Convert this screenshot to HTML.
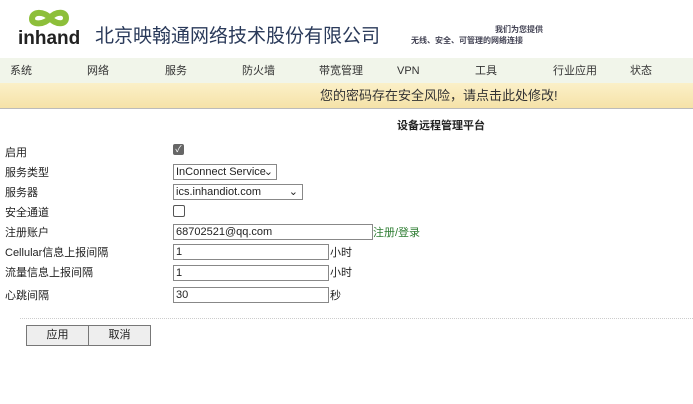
<!DOCTYPE html>
<html><head><meta charset="utf-8"><style>
body{margin:0;width:693px;height:404px;background:#fff;font-family:"Liberation Sans","Noto Sans CJK SC",sans-serif;font-size:11px;color:#222;position:relative;overflow:hidden}
.a{position:absolute;white-space:nowrap;line-height:13px}
.l{margin-top:2px}
.nav{position:absolute;left:0;top:58px;width:693px;height:25px;background:#f1f5ea;border-bottom:1px solid #ccc}
.nav span{position:absolute;top:7px;font-size:11px;line-height:13px;color:#333}
.ban{position:absolute;left:0;top:83px;width:693px;height:25px;background:linear-gradient(#fbf0c8,#f5e2a8);border-bottom:1px solid #bbb}
.inp{position:absolute;height:14px;border:1px solid #888;background:#fff;font-size:11px;line-height:14px;padding-left:2px;box-sizing:content-box}
.btn{position:absolute;top:325px;height:19px;width:61px;border:1px solid #777;background:#eee;text-align:center;line-height:19px;font-size:11px}
</style></head><body>
<svg class="a" style="left:18px;top:6px" width="64" height="46" viewBox="0 0 64 46">
<path d="M14 13 C14 5,26 5,32 12 C38 19,48 19,48 12 C48 5,38 5,32 12 C26 19,14 19,14 13Z" fill="none" stroke="#8dbf3a" stroke-width="6"/>
<text x="0" y="38" font-family="Liberation Sans" font-size="19" font-weight="bold" fill="#222">inhand</text>
</svg>
<div class="a" style="left:95px;top:26px;font-size:19px;line-height:22px;color:#2a3a5a">北京映翰通网络技术股份有限公司</div>
<div class="a" style="left:495px;top:23px;font-size:8px;font-weight:bold;color:#445">我们为您提供</div>
<div class="a" style="left:411px;top:34px;font-size:8px;font-weight:bold;color:#445">无线、安全、可管理的网络连接</div>
<div class="nav"><span style="left:10px">系统</span><span style="left:87px">网络</span><span style="left:165px">服务</span><span style="left:242px">防火墙</span><span style="left:319px">带宽管理</span><span style="left:397px">VPN</span><span style="left:475px">工具</span><span style="left:553px">行业应用</span><span style="left:630px">状态</span></div>
<div class="ban"><span class="a" style="left:320px;top:5px;font-size:13px;line-height:15px;color:#333">您的密码存在安全风险，请点击此处修改!</span></div>
<div class="a" style="left:397px;top:120px;font-weight:bold;font-size:11px;color:#222">设备远程管理平台</div>
<div class="a l" style="left:5px;top:145px">启用</div>
<div class="a" style="left:173px;top:144px;width:11px;height:11px;background:#666;border-radius:2px;color:#fff;font-size:9px;line-height:11px;text-align:center">✓</div>
<div class="a l" style="left:5px;top:165px">服务类型</div>
<div class="inp" style="left:173px;top:164px;width:100px">InConnect Service<span style="position:absolute;right:3px">⌄</span></div>
<div class="a l" style="left:5px;top:185px">服务器</div>
<div class="inp" style="left:173px;top:184px;width:126px">ics.inhandiot.com<span style="position:absolute;right:4px">⌄</span></div>
<div class="a l" style="left:5px;top:205px">安全通道</div>
<div class="a" style="left:173px;top:205px;width:10px;height:10px;border:1px solid #555;border-radius:2px"></div>
<div class="a l" style="left:5px;top:225px">注册账户</div>
<div class="inp" style="left:173px;top:224px;width:196px">68702521@qq.com</div>
<div class="a l" style="left:373px;top:225px;color:#2e7d32">注册/登录</div>
<div class="a l" style="left:5px;top:245px">Cellular信息上报间隔</div>
<div class="inp" style="left:173px;top:244px;width:152px">1</div><div class="a l" style="left:330px;top:245px">小时</div>
<div class="a l" style="left:5px;top:265px">流量信息上报间隔</div>
<div class="inp" style="left:173px;top:265px;width:152px">1</div><div class="a l" style="left:330px;top:265px">小时</div>
<div class="a l" style="left:5px;top:288px">心跳间隔</div>
<div class="inp" style="left:173px;top:287px;width:152px">30</div><div class="a l" style="left:330px;top:288px">秒</div>
<div class="a" style="left:20px;top:318px;width:673px;border-top:1px dotted #ccc"></div>
<div class="btn" style="left:26px">应用</div>
<div class="btn" style="left:88px">取消</div>
</body></html>
